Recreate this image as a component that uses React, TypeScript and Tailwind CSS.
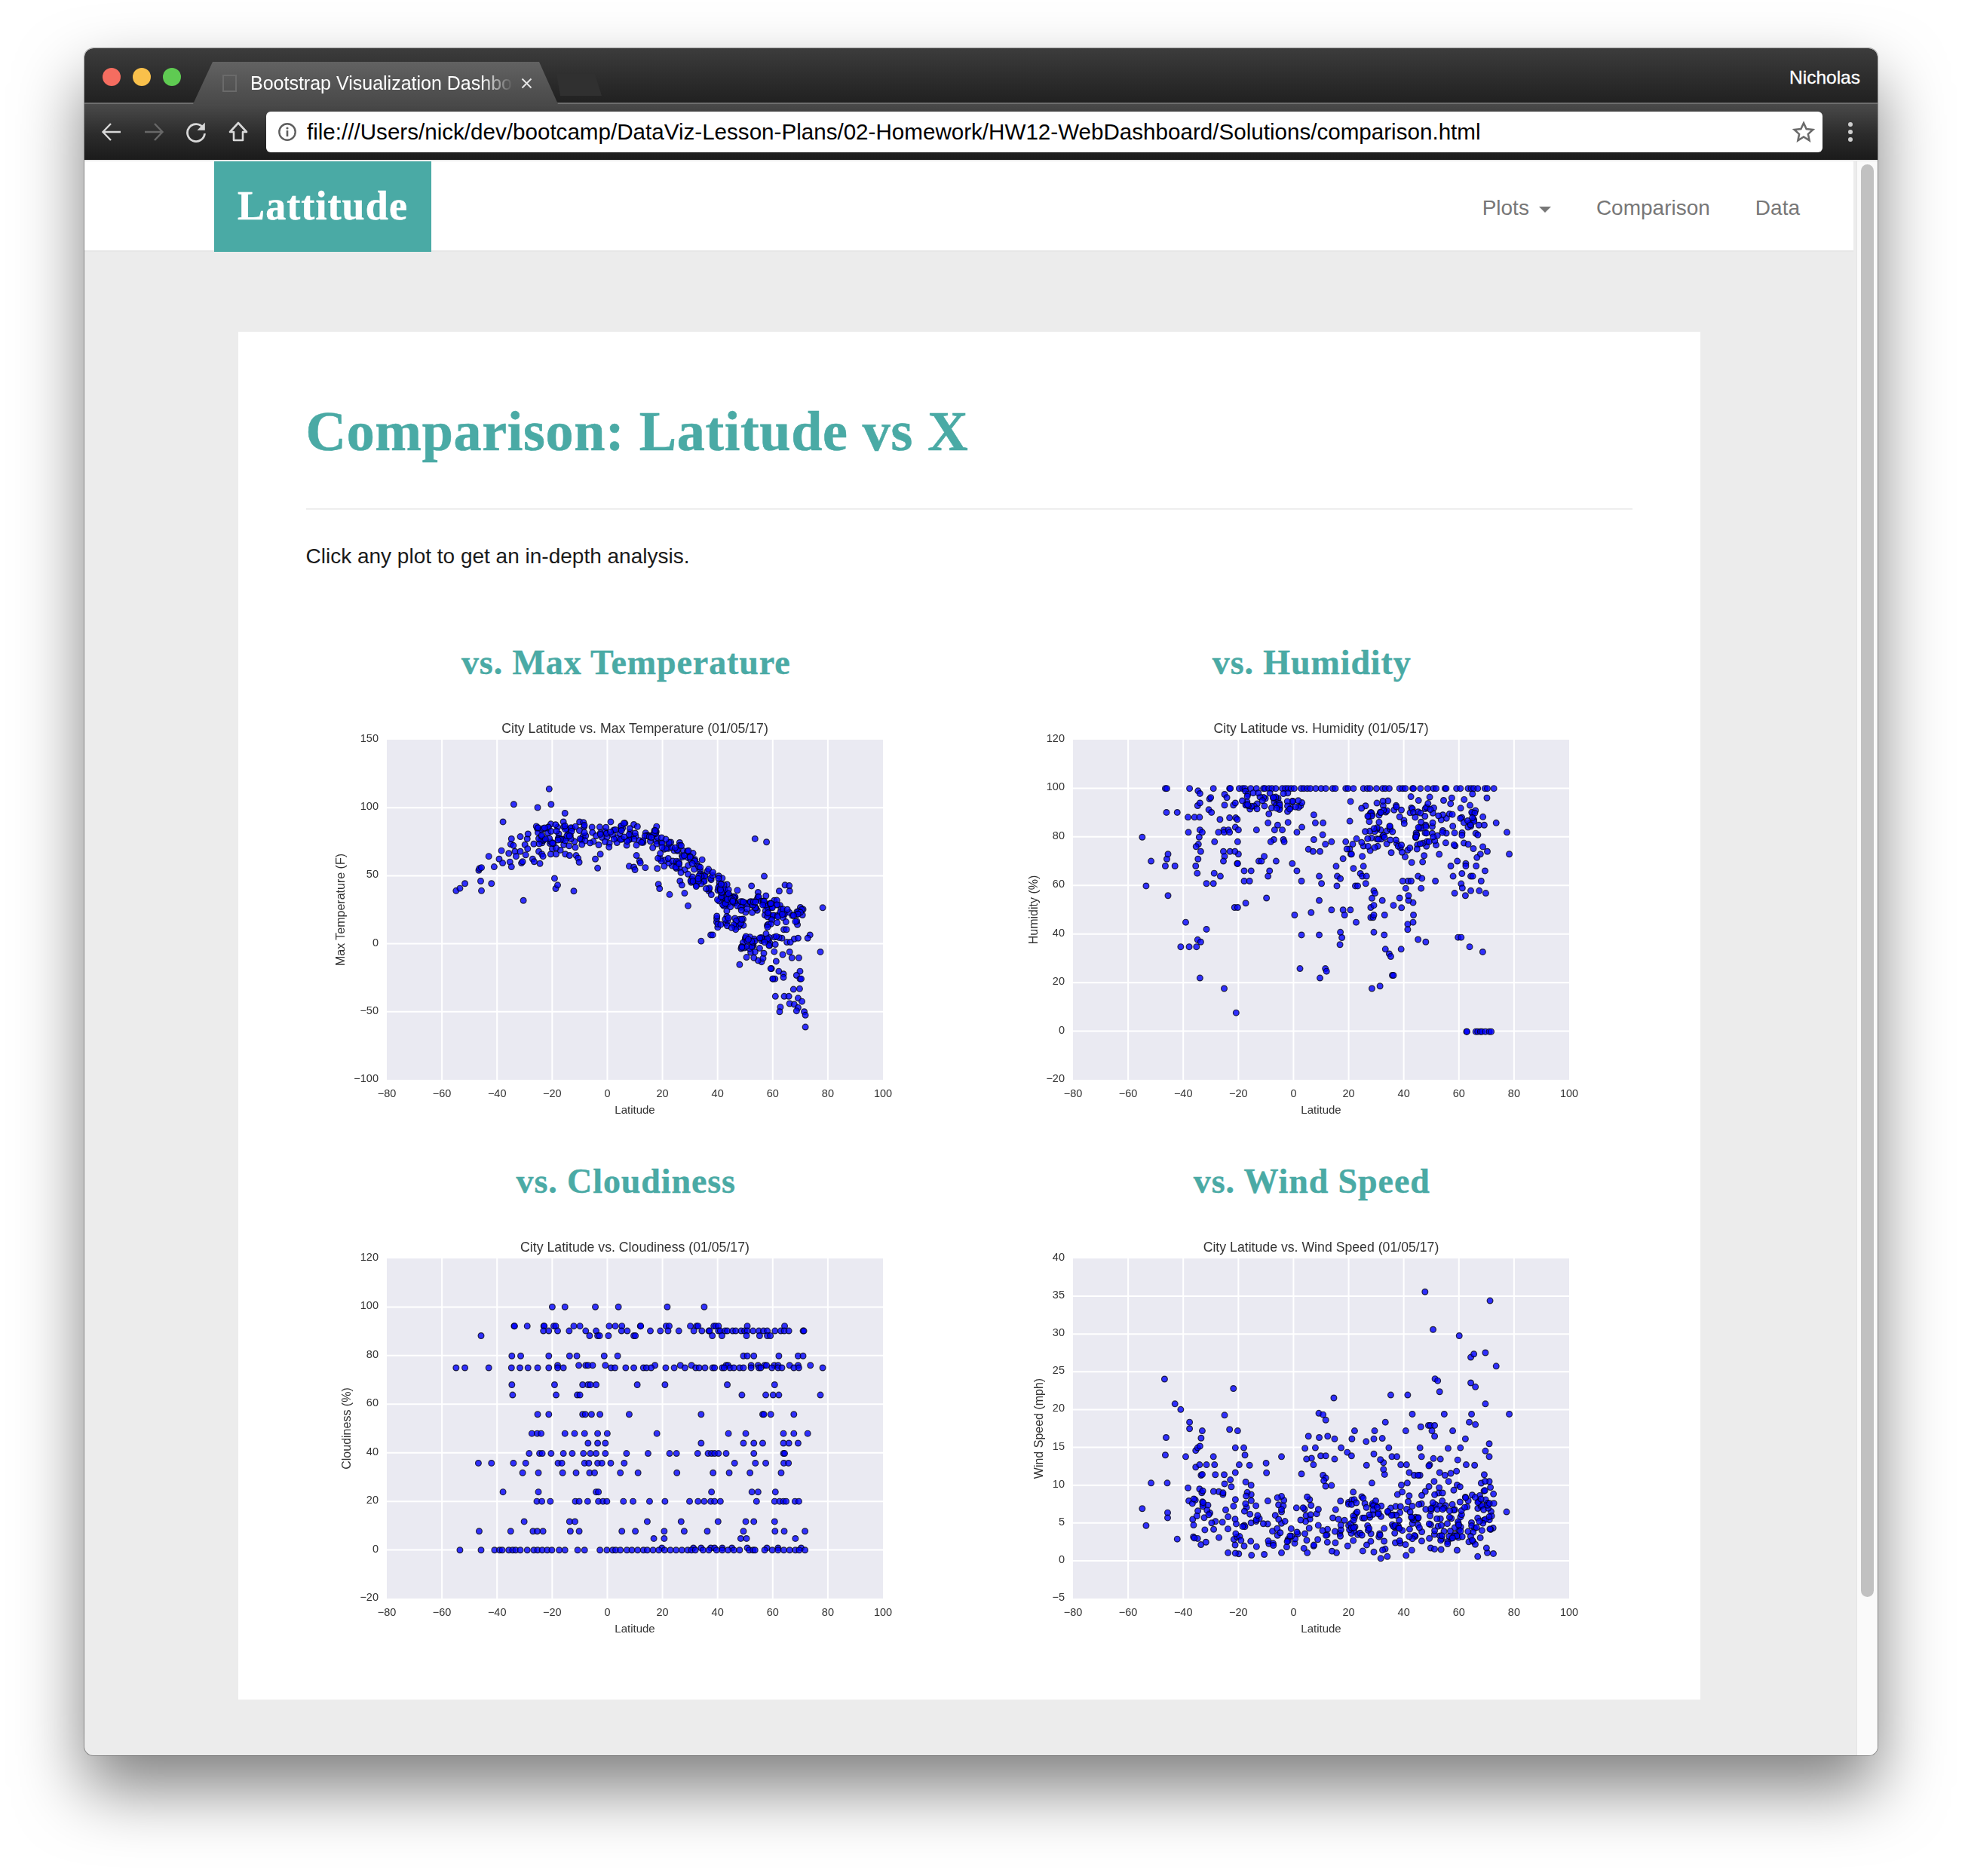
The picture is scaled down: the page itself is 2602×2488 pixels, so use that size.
import React from "react";

type Pt = [number, number];

function parse(s: string): Pt[] {
  return s.trim().split(/\s+/).map((p) => {
    const [a, b] = p.split(",").map(Number);
    return [a, b] as Pt;
  });
}

function rows(r: [number, string][]): Pt[] {
  const out: Pt[] = [];
  r.forEach(([y, xs]) => xs.trim().split(/\s+/).forEach((x) => out.push([Number(x), y])));
  return out;
}

function band(seed: number, n: number, x0: number, x1: number, f: (x: number) => number, spread: number): Pt[] {
  let s = seed;
  const rnd = () => {
    s = (s * 16807) % 2147483647;
    return s / 2147483647;
  };
  for (let i = 0; i < 5; i++) rnd();
  const out: Pt[] = [];
  for (let i = 0; i < n; i++) {
    const x = x0 + rnd() * (x1 - x0);
    const y = f(x) + (rnd() * 1.5 + rnd() * 0.5 - 1) * spread;
    out.push([x, y]);
  }
  return out;
}

const tempPts: Pt[] = [
  ...parse(`363,676 373,667 386,649 422,600 424,593 429,590 427,640 429,676 455,649 462,587 448,548 475,558 481,527 485,420 484,573 503,569 507,587 500,537 505,503 507,483 513,355 512,508 516,530 519,548 530,475 533,573 536,568 538,712 530,530 542,505 544,543 549,520 548,483 550,465 562,558 566,568 565,502 574,445 575,367 576,460 578,530 581,575 586,540 589,548 583,490 586,450 605,298 603,440 610,355 607,500 609,540 613,520 619,630 623,540 622,668 627,655 627,440 630,465 634,525 642,420 646,388 643,505 647,540 658,545 660,470 665,445 669,677 673,515 675,545 680,555 683,570 684,420 694,422 725,558 731,592 738,540 765,420 813,585 825,588 828,598 825,430 832,545 840,565 842,572 855,590 886,593 889,652 892,668 904,585 918,690 945,640 950,655 957,685 966,732 1000,863 1025,840 1030,840 1140,483 1170,495 1164,622 1131,658 1148,682 1203,677 1218,655 1229,657 1230,677 1190,712 1205,730 1258,738 1265,745 1316,739 1283,840 1277,852 1310,903 1100,950 1183,965 1187,1003 1192,1003 1202,975 1214,985 1214,998 1230,903 1236,925 1254,925 1257,975 1248,990 1257,1003 1260,1003 1240,1042 1256,1040 1193,1068 1216,1068 1228,1068 1252,1075 1262,1087 1230,1095 1242,1098 1206,1108 1204,1125 1252,1110 1248,1122 1268,1125 1271,1138 1271,1182 1186,1003 1181,965 1157,940 1148,935 1118,923 1137,925 1129,905 1140,903 1161,927 1163,908 1195,938 1190,902 1212,913 1215,820 1222,820 1242,855 1252,852 1223,867 1232,867`),
  ...band(21, 125, 570, 890, () => 468, 52),
  ...band(47, 125, 870, 1075, (x) => 478 + (x - 870) * 1.08, 68),
  ...band(83, 75, 1050, 1200, (x) => 705 + (x - 1050) * 0.2, 48),
  ...band(131, 26, 1040, 1110, () => 790, 40),
  ...band(197, 40, 1100, 1210, () => 865, 32),
  ...band(233, 35, 1170, 1270, () => 775, 55),
];

const humPts: Pt[] = [
  ...parse(`343,477 353,658 366,566 403,584 407,558 410,540 410,694 406,385 434,385 428,584 456,793 443,884 465,884 484,884 487,858 495,866 493,1000 510,819 510,649 462,403 463,459 479,403 492,403 488,305 493,315 487,360 493,350 491,477 493,450 499,459 489,503 483,512 495,530 488,558 482,584 486,611 531,494 528,649 530,611 546,622 516,375 518,335 521,330 523,385 545,411 541,459 555,450 556,459 567,450 570,459 554,530 557,548 554,566 571,530 557,358 557,318 563,330 570,405 580,358 585,350 586,405 590,411 585,440 593,450 591,494 593,540 584,530 590,575 591,575 583,738 591,738 612,722 608,640 622,640 608,602 626,602 556,1039 587,1129 646,566 653,566 670,622 674,602 666,703 660,548 691,566 722,422 670,424 640,450 695,432 687,450 707,450 685,486 677,494 710,486 712,494 733,575 745,602 757,640 739,766 757,840 803,840 753,965 805,1000 819,965 822,975 782,757 803,712 809,649 803,622 775,522 787,530 805,530 789,486 793,424 789,394 758,440 745,459 812,468 813,424 835,494 819,503 835,747 865,747 884,747 869,766 899,793 858,830 862,850 857,876 850,622 858,631 849,658 847,585 865,557 892,593 890,503 872,494 882,521 875,521 885,540 887,540 918,510 915,548 918,585 910,612 915,622 926,622 924,649 897,658 903,658 940,704 945,676 948,685 937,738 945,730 967,712 937,775 943,775 945,766 945,830 972,840 973,766 940,1039 961,1030 975,893 985,910 989,920 993,990 996,990 1016,893 996,730 1012,703 1017,739 1033,800 1033,820 1047,793 1048,766 1047,720 1035,712 1035,694 1028,667 1020,640 1034,640 1042,640 1068,667 1060,622 1070,630 1060,857 1080,866 1105,640 1164,849 1172,849 1194,884 1228,903 1183,694 1197,676 1172,650 1175,666 1155,685 1219,676 1236,685 1224,640 1234,602 1197,622 1202,622 1174,612 1151,622 1211,584 1184,575 1184,584 1162,566 1145,584 1291,459 1297,540 1263,424 1240,530 1222,540 1232,432 1218,432 1186,1199 1187,1199 1210,1199 1215,1199 1222,1199 1226,1199 1235,1199 1245,1199 1250,1199`),
  ...rows([[296, `403 407 466 528 570 572 595 604 610 625 640 658 662 672 680 690 707 715 722 730 738 756 763 772 780 794 808 820 838 845 872 878 892 918 928 935 952 968 975 985 1012 1020 1027 1046 1048 1066 1085 1100 1107 1130 1133 1160 1170 1190 1198 1205 1215 1234 1240 1257`]]),
  ...band(311, 50, 600, 760, () => 345, 48),
  ...band(353, 60, 930, 1060, () => 440, 140),
  ...band(389, 90, 1050, 1240, () => 440, 140),
  ...band(419, 15, 860, 960, () => 420, 120),
];

const cloudPts: Pt[] = rows([
  [290, "613 646 725 785 912 1008"],
  [361, "514 515 548 591 592 617 622 669 685 761 777 794 842 843 909 917 972 988 992 1033 1038 1045 1120 1217"],
  [379, "590 604 627 657 700 727 793 808 868 894 914 942 981 1002 1020 1022 1045 1050 1062 1068 1082 1090 1104 1113 1120 1135 1150 1162 1172 1192 1207 1216 1228 1265 1267"],
  [397, "428 710 731 736 759 825 829 1029 1054 1118 1152 1172 1180"],
  [472, "508 531 604 658 677 748 783 1110 1120 1137 1202 1252 1265"],
  [507, "627 682 700 706 718 751 880 946 975 1065 1070 1130 1148 1165 1170 1190 1200 1230 1252 1284"],
  [516, "363 386 448 507 529 550 575 604 627 642 766 776 804 825 850 858 870 908 930 958 986 995 1010 1030 1035 1055 1060 1075 1085 1100 1110 1130 1150 1155 1184 1200 1210 1241 1254 1316"],
  [579, "508 619 692 706 712 727 834 906 1068 1191"],
  [617, "510 623 678 685 1106 1168 1187 1202 1310"],
  [689, "575 604 692 699 715 737 813 1000 1160 1163 1181 1241"],
  [760, "560 574 584 646 671 697 731 756 885 1071 1116 1214 1241 1277"],
  [796, "706 731 751 1000 1110 1137 1160 1214 1228 1252"],
  [834, "553 580 587 610 642 665 694 712 727 751 806 862 918 936 991 1018 1027 1035 1045 1065 1137 1214 1217"],
  [870, "421 455 512 544 628 638 697 708 731 742 765 800 1087 1141 1168 1215 1227"],
  [906, "536 577 640 675 710 723 790 836 937 1031 1073 1127 1208"],
  [977, "485 577 727 733 1027 1132 1148 1193"],
  [1012, "573 586 608 673 683 705 733 745 755 798 823 866 906 970 992 1008 1025 1035 1050 1144 1191 1204 1214 1221 1244 1254"],
  [1087, "540 658 672 860 948 1044 1116 1137 1191"],
  [1123, "423 505 563 574 589 660 683 794 829 904 956 1016 1110 1192 1216 1270"],
  [1150, "877 904 1103 1118 1245"],
  [1185, "898 980 1000 1025 1035 1055 1080 1120 1171 1200 1260"],
  [1193, "373 428 463 476 483 500 510 518 530 548 565 575 587 600 612 631 646 679 697 737 755 770 778 790 807 820 835 850 860 875 890 905 920 935 950 965 975 985 1005 1020 1040 1055 1070 1085 1100 1125 1135 1140 1165 1185 1200 1215 1230 1245 1255 1270"],
]);

const windPts: Pt[] = [
  ...parse(`343,1039 353,1102 366,944 401,558 428,650 443,671 405,775 403,840 408,944 409,1054 409,1073 434,1152 456,846 462,962 464,1010 466,718 466,742 481,1007 482,885 482,823 487,813 493,807 492,876 496,777 499,750 496,915 499,912 492,966 580,593 557,692 570,745 591,750 585,813 607,813 610,840 622,878 528,846 531,876 510,876 533,913 556,913 557,947 542,976 572,932 585,905 595,876 612,940 626,952 665,870 666,906 705,846 802,685 813,690 820,710 841,628 825,770 843,780 803,775 843,855 775,770 766,815 793,813 788,876 783,852 770,855 757,910 807,843 820,843 813,915 820,925 815,935 835,953 860,813 876,830 887,843 888,780 895,750 926,878 925,790 945,780 947,750 945,836 967,778 970,868 962,857 975,718 989,617 984,813 992,846 1005,846 1033,617 1028,750 1045,688 1067,735 1087,730 1092,730 1103,730 1096,750 1103,770 1065,813 1069,846 1078,234 1099,374 1104,557 1111,564 1116,605 1128,688 1138,815 1150,750 1167,397 1197,477 1205,465 1235,460 1247,267 1263,510 1197,572 1209,587 1235,650 1199,688 1193,718 1209,727 1245,798 1235,825 1245,846 1297,688 1290,1051 1245,938 1232,913 1183,780 1170,813 1163,858 1185,876 1207,878 1090,876 1100,853 1118,855 1116,905 1130,915 1145,908 1160,900 1088,880 1030,876 1015,876 1037,905 1050,915 1065,915 973,912 970,893 940,944 1032,944 1060,915 963,1224 980,1217 627,1212 566,1203 705,1203 1215,1217 1240,1203 640,1180 772,1203 848,1203 945,1200`),
  ...band(503, 150, 470, 900, () => 1085, 135),
  ...band(541, 190, 880, 1260, () => 1095, 125),
  ...band(577, 35, 1000, 1260, () => 985, 65),
];

type Chart = {
  title: string;
  heading: string;
  ylabel: string;
  ylabelX: number;
  yTicks: number[];
  pts: Pt[];
  x0: number;
  y0: number;
};

const charts: Chart[] = [
  { heading: "vs. Max Temperature", title: "City Latitude vs. Max Temperature (01/05/17)", ylabel: "Max Temperature (F)", ylabelX: 27, yTicks: [150, 100, 50, 0, -50, -100], pts: tempPts, x0: 183, y0: 115 },
  { heading: "vs. Humidity", title: "City Latitude vs. Humidity (01/05/17)", ylabel: "Humidity (%)", ylabelX: 36, yTicks: [120, 100, 80, 60, 40, 20, 0, -20], pts: humPts, x0: 163, y0: 115 },
  { heading: "vs. Cloudiness", title: "City Latitude vs. Cloudiness (01/05/17)", ylabel: "Cloudiness (%)", ylabelX: 35, yTicks: [120, 100, 80, 60, 40, 20, 0, -20], pts: cloudPts, x0: 183, y0: 110 },
  { heading: "vs. Wind Speed", title: "City Latitude vs. Wind Speed (01/05/17)", ylabel: "Wind Speed (mph)", ylabelX: 43, yTicks: [40, 35, 30, 25, 20, 15, 10, 5, 0, -5], pts: windPts, x0: 163, y0: 110 },
];

const xTicks = [-80, -60, -40, -20, 0, 20, 40, 60, 80, 100];
const PX = 83;
const PY = 41;
const PW = 658;
const PH = 451;

function fmt(n: number) {
  return n < 0 ? `\u2212${-n}` : `${n}`;
}

function Plot({ c }: { c: Chart }) {
  const lat = (v: number) => PX + ((v + 80) / 180) * PW;
  const yMax = c.yTicks[0];
  const yMin = c.yTicks[c.yTicks.length - 1];
  const val = (v: number) => PY + ((yMax - v) / (yMax - yMin)) * PH;
  return (
    <svg width={800} height={560} viewBox="0 0 800 560" className="block mx-auto blur-[0.55px]" style={{ fontFamily: '"Liberation Sans", sans-serif' }}>
      <rect x={PX} y={PY} width={PW} height={PH} fill="#eaeaf2" />
      {xTicks.slice(1, -1).map((t) => (
        <line key={t} x1={lat(t)} x2={lat(t)} y1={PY} y2={PY + PH} stroke="#fff" strokeWidth={2} />
      ))}
      {c.yTicks.slice(1, -1).map((t) => (
        <line key={t} x1={PX} x2={PX + PW} y1={val(t)} y2={val(t)} stroke="#fff" strokeWidth={2} />
      ))}
      {c.pts.map(([zx, zy], i) => (
        <circle key={i} cx={PX + (zx - c.x0) / 1.96} cy={PY + (zy - c.y0) / 2.8} r={3.9} fill="#0000ff" fillOpacity={0.8} stroke="#000" strokeOpacity={0.75} strokeWidth={1.2} />
      ))}
      <text x={PX + PW / 2} y={32} textAnchor="middle" fontSize={17.7} fill="#333">{c.title}</text>
      {xTicks.map((t) => (
        <text key={t} x={lat(t)} y={515} textAnchor="middle" fontSize={14.5} fill="#333">{fmt(t)}</text>
      ))}
      {c.yTicks.map((t) => (
        <text key={t} x={PX - 11} y={val(t) + 3} textAnchor="end" fontSize={14.5} fill="#333">{fmt(t)}</text>
      ))}
      <text x={PX + PW / 2} y={537} textAnchor="middle" fontSize={15} fill="#333">Latitude</text>
      <text transform={`translate(${c.ylabelX} ${PY + PH / 2}) rotate(-90)`} textAnchor="middle" fontSize={16} fill="#333">{c.ylabel}</text>
    </svg>
  );
}

function Chrome() {
  return (
    <div className="shrink-0 text-white" style={{ fontFamily: '"Liberation Sans", sans-serif' }}>
      <div className="h-[74px] flex items-end bg-gradient-to-b from-[#3c3c3c] to-[#212121] rounded-t-[12px] border-b-2 border-[#6e6e6e]">
        <div className="self-start mt-[26px] ml-[24px] flex gap-[16px] w-[120px] shrink-0">
          <span className="w-[24px] h-[24px] rounded-full bg-[#f56d60]" />
          <span className="w-[24px] h-[24px] rounded-full bg-[#f9c04b]" />
          <span className="w-[24px] h-[24px] rounded-full bg-[#5fcb52]" />
        </div>
        <div className="relative -mb-[2px] h-[56px] w-[484px] bg-gradient-to-b from-[#626262] to-[#494949] [clip-path:polygon(26px_0,459px_0,484px_100%,0_100%)] flex items-center pl-[39px] shrink-0">
          <span className="w-[19px] h-[23px] border-2 border-[#6a6a6a] shrink-0" />
          <span className="ml-[18px] w-[356px] overflow-hidden whitespace-nowrap text-[25px] leading-[55px] [mask-image:linear-gradient(to_right,#000_86%,transparent_98%)]">
            Bootstrap Visualization Dashbo
          </span>
          <svg className="absolute left-[435px] top-[21px]" width="15" height="15" viewBox="0 0 15 15" fill="none" stroke="#e6e6e6" strokeWidth="2"><path d="M1.500 1.500l12 12M13.500 1.500l-12 12" /></svg>
        </div>
        <div className="-ml-[6px] mb-[9px] h-[29px] w-[64px] bg-[#303030] [clip-path:polygon(4px_0,55px_0,64px_100%,9px_100%)] shrink-0" />
        <span className="ml-auto self-start mt-[23px] mr-[23px] text-[24.500px] leading-[32px] [-webkit-text-stroke:0.3px_white]">Nicholas</span>
      </div>
      <div className="h-[76px] pb-[1px] flex items-center bg-[linear-gradient(to_bottom,#4a4a4a,#2b2b2b_55%,#1b1b1b)] border-b-2 border-[#e8e8e8]">
        <div className="flex items-center w-[241px] pl-[22px] shrink-0">
          <svg width="28" height="28" viewBox="0 0 28 28" fill="none" stroke="#d8d8d8" strokeWidth="2.400"><path d="M26 14H3M13 3 2.500 14 13 25" /></svg>
          <svg className="ml-[28px]" width="28" height="28" viewBox="0 0 28 28" fill="none" stroke="#686868" strokeWidth="2.400"><path d="M2 14h23M15 3l10.500 11L15 25" /></svg>
          <svg className="ml-[28px]" width="28" height="28" viewBox="0 0 28 28" fill="none" stroke="#d8d8d8" strokeWidth="2.800"><path d="M23.500 8.500A11.500 11.500 0 1 0 25.500 16" /><path d="M25.800 1.500v10.300H15.500z" fill="#d8d8d8" stroke="none" /></svg>
          <svg className="ml-[28px]" width="28" height="28" viewBox="0 0 28 28" fill="none" stroke="#d8d8d8" strokeWidth="2.600"><path d="M14 2 25 14h-5v11H8V14H3z" strokeLinejoin="round" /></svg>
        </div>
        <div className="flex-1 h-[54px] bg-white rounded-[6px] flex items-center pl-[16px] pr-[10px] text-black">
          <svg width="24" height="24" viewBox="0 0 24 24" className="shrink-0"><circle cx="12" cy="12" r="10.700" fill="none" stroke="#5f5f5f" strokeWidth="2.400" /><circle cx="12" cy="7" r="1.600" fill="#5f5f5f" /><rect x="10.700" y="10" width="2.600" height="8" fill="#5f5f5f" /></svg>
          <span className="ml-[14px] text-[29.600px] leading-[54px] whitespace-nowrap">file:///Users/nick/dev/bootcamp/DataViz-Lesson-Plans/02-Homework/HW12-WebDashboard/Solutions/comparison.html</span>
          <svg className="ml-auto shrink-0" width="30" height="30" viewBox="0 0 24 24" fill="none" stroke="#6a6a6a" strokeWidth="2"><path d="M12 2.500l2.900 6.300 6.900.8-5.100 4.700 1.400 6.800L12 17.200l-6.100 3.900 1.400-6.800L2.200 9.600l6.900-.8z" strokeLinejoin="miter" /></svg>
        </div>
        <div className="w-[73px] flex flex-col items-center gap-[4px] shrink-0">
          <span className="w-[6px] h-[6px] rounded-full bg-[#cfcfcf]" />
          <span className="w-[6px] h-[6px] rounded-full bg-[#cfcfcf]" />
          <span className="w-[6px] h-[6px] rounded-full bg-[#cfcfcf]" />
        </div>
      </div>
    </div>
  );
}

export default function App() {
  const serif = { fontFamily: '"Liberation Serif", Georgia, serif' };
  return (
    <div className="w-[2602px] h-[2488px] bg-white pt-[64px] pl-[112px] overflow-hidden" style={{ fontFamily: '"Liberation Sans", sans-serif' }}>
      <div className="w-[2378px] h-[2264px] rounded-[12px] flex flex-col overflow-hidden shadow-[0_0_0_1px_rgba(0,0,0,0.3),0_44px_88px_rgba(0,0,0,0.5)] bg-[#ececec]">
        <Chrome />
        <div className="flex flex-1 min-h-0">
          <div className="flex-1 min-w-0 pr-[4px]">
            <nav className="h-[120px] bg-white border-b-2 border-[#e7e7e7] flex pl-[172px] pr-[71px]">
              <div className="w-[288px] h-[120px] bg-[#4aaaa5] text-white flex items-center justify-center font-bold text-[54px] tracking-[1.100px] pb-[2px] [-webkit-text-stroke:0.5px_white]" style={serif}>Lattitude</div>
              <div className="ml-auto flex items-center text-[#777] text-[28px] gap-[60px] pt-[6px]">
                <span className="flex items-center">Plots<span className="ml-[13px] mt-[4px] w-0 h-0 border-x-[8px] border-x-transparent border-t-[8px] border-t-[#777]" /></span>
                <span>Comparison</span>
                <span>Data</span>
              </div>
            </nav>
            <main className="w-[1939px] mx-auto mt-[106px] bg-white px-[90px] pt-[90px] pb-[38px]">
              <h1 className="text-[#4aaaa5] font-bold text-[74px] tracking-[0.700px] leading-[84px] [-webkit-text-stroke:0.6px_#4aaaa5]" style={serif}>Comparison: Latitude vs X</h1>
              <hr className="mt-[60px] border-0 h-[2px] bg-[#eeeeee]" />
              <p className="mt-[42px] text-[28px] leading-[40px] text-[#1a1a1a]">Click any plot to get an in-depth analysis.</p>
              <div className="mt-[82px] -mx-[30px] grid grid-cols-2">
                {charts.map((c) => (
                  <section key={c.heading} className="h-[688px] min-w-0">
                    <h3 className="h-[78px] text-center text-[#4aaaa5] font-bold text-[46px] tracking-[0.900px] leading-[78px] [-webkit-text-stroke:0.4px_#4aaaa5]" style={serif}>{c.heading}</h3>
                    <div className="mt-[22px]"><Plot c={c} /></div>
                  </section>
                ))}
              </div>
            </main>
          </div>
          <div className="w-[28px] bg-[#fafafa] border-l border-[#e4e4e4] px-[5px] pt-[4px] shrink-0">
            <div className="h-[1900px] rounded-full bg-[#c1c1c1]" />
          </div>
        </div>
      </div>
    </div>
  );
}
